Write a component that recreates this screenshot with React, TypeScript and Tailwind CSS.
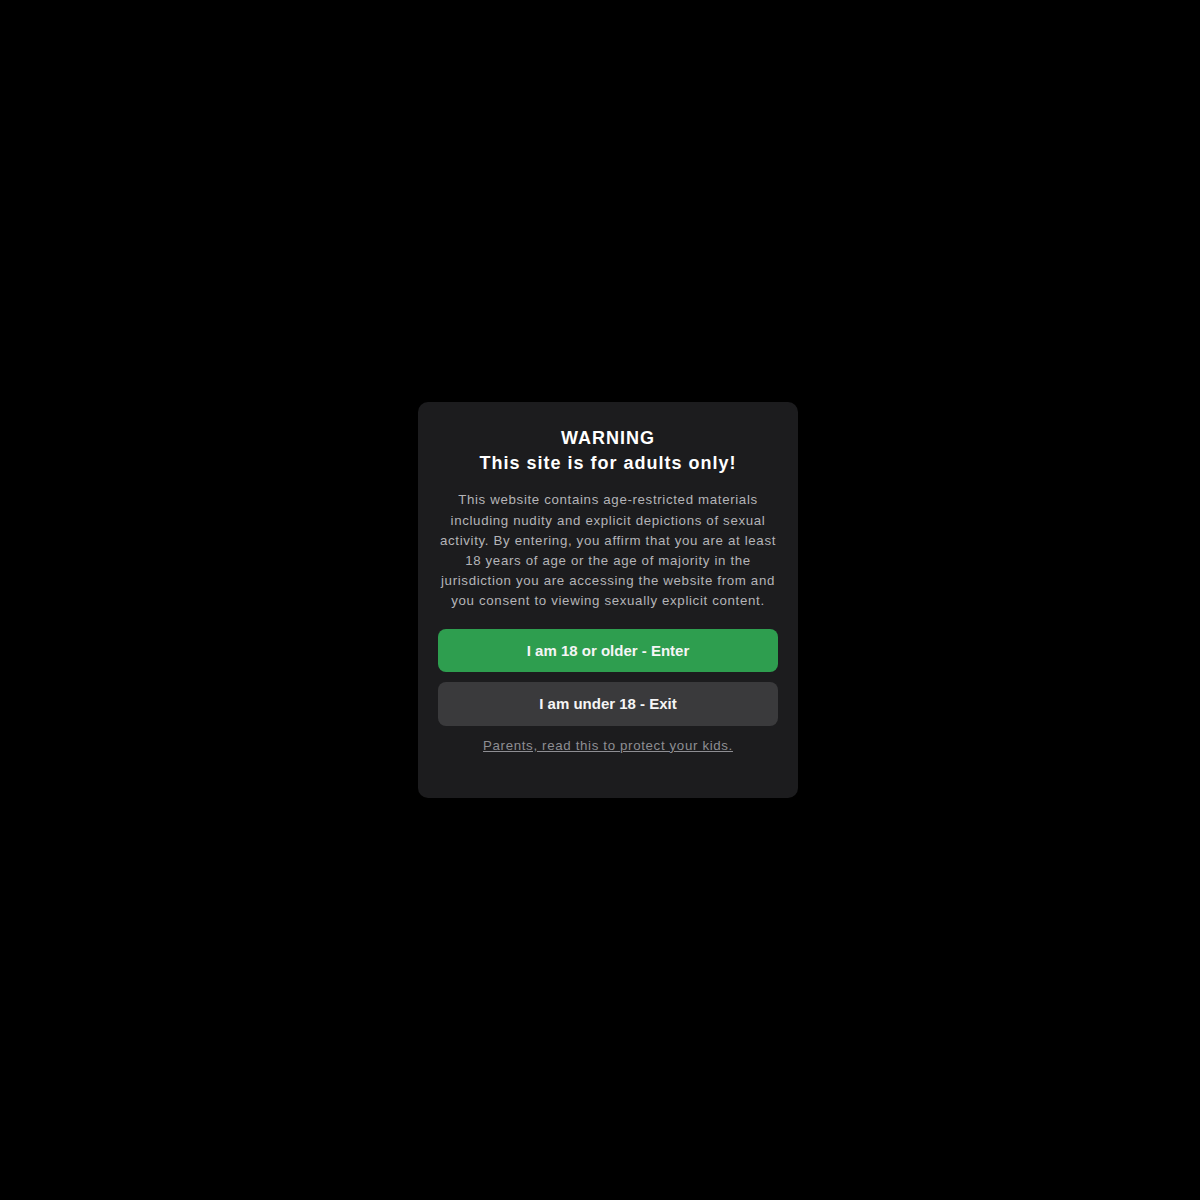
import React from "react";

export default function App() {
  return (
    <div className="min-h-screen w-full bg-black flex items-center justify-center" style={{ fontFamily: '"Liberation Sans", Arial, sans-serif' }}>
      <div className="ml-4 w-[380px] rounded-[10px] bg-[#1c1c1e] px-5 pt-[24px] pb-[41px] text-center">
        <h1 className="text-[18px] leading-[25px] font-bold text-white tracking-[1px]">
          WARNING
          <br />
          This site is for adults only!
        </h1>
        <p className="mt-[14px] text-[13.3px] leading-[20.2px] tracking-[0.65px] text-[#b4b4b8]">
          This website contains age-restricted materials including nudity and explicit depictions of sexual activity. By entering, you affirm that you are at least 18 years of age or the age of majority in the jurisdiction you are accessing the website from and you consent to viewing sexually explicit content.
        </p>
        <div className="mt-[17px] flex flex-col gap-[10px]">
          <button className="h-[43px] w-full rounded-[8px] bg-[#2e9e4f] pt-[2px] text-[15px] font-bold text-[#f5f5f5]">
            I am 18 or older - Enter
          </button>
          <button className="h-[44px] w-full rounded-[8px] bg-[#3a3a3c] pt-[2px] text-[15px] font-bold text-[#f5f5f5]">
            I am under 18 - Exit
          </button>
        </div>
        <a href="#" className="mt-[10px] inline-block text-[13.3px] leading-[20px] tracking-[0.65px] text-[#8e8e93] underline">
          Parents, read this to protect your kids.
        </a>
      </div>
    </div>
  );
}
